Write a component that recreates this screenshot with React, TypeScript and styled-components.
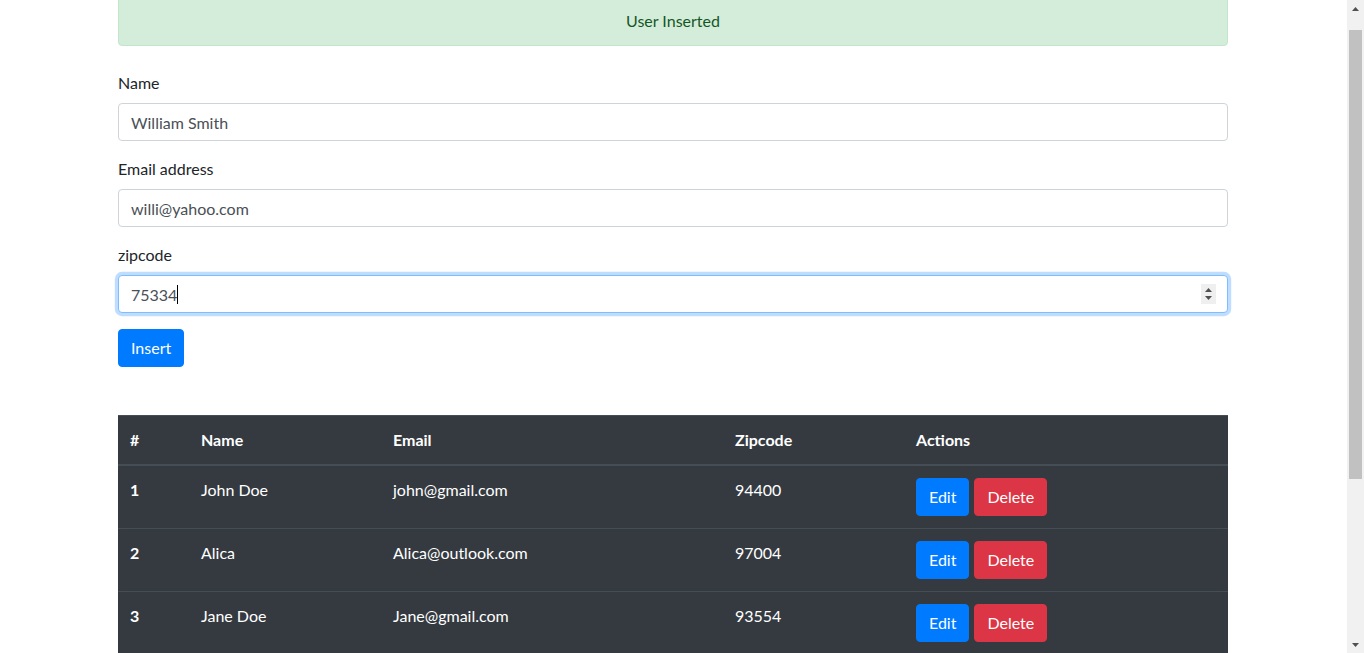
import React, { useEffect } from "react";
import styled, { createGlobalStyle } from "styled-components";

const GlobalStyle = createGlobalStyle`
  html { overflow-y: scroll; scrollbar-width: none; }
  html::-webkit-scrollbar { display: none; }
  body {
    margin: 0 18px 0 0;
    font-family: "Lato", "Noto Sans", sans-serif;
    font-size: 16px;
    line-height: 1.5;
    color: #212529;
    background: #fff;
  }
  *, *::before, *::after { box-sizing: border-box; }
`;

const ScrollBar = styled.div`
  position: fixed;
  top: 0;
  right: 0;
  width: 17px;
  height: 100vh;
  background: #f1f1f1;
  display: flex;
  flex-direction: column;
  align-items: center;
`;

const ScrollArrow = styled.div`
  height: 17px;
  width: 17px;
  display: flex;
  align-items: center;
  justify-content: center;
`;

const ScrollTrack = styled.div`
  flex: 1;
  width: 100%;
  padding: 13px 2px 157px;
  display: flex;
`;

const ScrollThumb = styled.div`
  flex: 1;
  background: #c1c1c1;
`;

const Container = styled.div`
  max-width: 1140px;
  margin: 0 auto;
  padding: 15px 15px 227px;
`;

const Alert = styled.div`
  padding: 12px 20px;
  margin-bottom: 25px;
  border: 1px solid #c3e6cb;
  border-radius: 4px;
  background: #d4edda;
  color: #155724;
  text-align: center;
`;

const FormGroup = styled.div`
  margin-bottom: 16px;
`;

const Label = styled.label`
  display: inline-block;
  margin-bottom: 8px;
`;

const Input = styled.input<{ $focused?: boolean }>`
  display: block;
  width: 100%;
  height: 38px;
  padding: 6px 12px;
  font-family: inherit;
  font-size: 16px;
  line-height: 1.5;
  color: #495057;
  background: #fff;
  border: 1px solid ${(p) => (p.$focused ? "#80bdff" : "#ced4da")};
  border-radius: 4px;
  outline: none;
  box-shadow: ${(p) => (p.$focused ? "0 0 0 3.2px rgba(0,123,255,.25)" : "none")};
  caret-color: transparent;
`;

const FieldWrap = styled.div`
  position: relative;
`;

const CaretLayer = styled.div`
  position: absolute;
  inset: 0;
  padding: 7px 13px;
  line-height: 24px;
  pointer-events: none;
  display: flex;
  align-items: center;
`;

const Ghost = styled.span`
  visibility: hidden;
  white-space: pre;
`;

const Caret = styled.span`
  width: 1px;
  height: 19px;
  background: #000;
`;

const Spinner = styled.div`
  position: absolute;
  right: 12px;
  top: 9px;
  width: 15px;
  height: 20px;
  background: #efefef;
  display: flex;
  flex-direction: column;
  align-items: center;
  justify-content: center;
  gap: 4px;
`;

const Button = styled.button<{ $variant?: "primary" | "danger" }>`
  display: inline-block;
  font-family: inherit;
  font-size: 16px;
  line-height: 1.5;
  padding: 6px 12px;
  border: 1px solid ${(p) => (p.$variant === "danger" ? "#dc3545" : "#007bff")};
  border-radius: 4px;
  background: ${(p) => (p.$variant === "danger" ? "#dc3545" : "#007bff")};
  color: #fff;
  cursor: pointer;
`;

const InsertRow = styled.div`
  margin-bottom: 48px;
`;

const Table = styled.table`
  width: 100%;
  border-collapse: collapse;
  background: #343a40;
  color: #fff;
`;

const Th = styled.th<{ $w?: number }>`
  text-align: left;
  font-weight: 700;
  padding: 12px;
  vertical-align: bottom;
  border-top: 1px solid #454d55;
  border-bottom: 2px solid #454d55;
  width: ${(p) => (p.$w ? `${p.$w}px` : "auto")};
`;

const Td = styled.td<{ $bold?: boolean }>`
  padding: 12px;
  vertical-align: top;
  border-top: 1px solid #454d55;
  font-weight: ${(p) => (p.$bold ? 700 : 400)};
`;

const Actions = styled.div`
  display: flex;
  gap: 5px;
`;

const users = [
  { id: 1, name: "John Doe", email: "john@gmail.com", zip: "94400" },
  { id: 2, name: "Alica", email: "Alica@outlook.com", zip: "97004" },
  { id: 3, name: "Jane Doe", email: "Jane@gmail.com", zip: "93554" },
];

export default function App() {
  useEffect(() => {
    window.scrollTo(0, 19);
  }, []);
  return (
    <>
      <GlobalStyle />
      <Container>
        <Alert>User Inserted</Alert>
        <form onSubmit={(e) => e.preventDefault()}>
          <FormGroup>
            <Label>Name</Label>
            <Input defaultValue="William Smith" />
          </FormGroup>
          <FormGroup>
            <Label>Email address</Label>
            <Input defaultValue="willi@yahoo.com" />
          </FormGroup>
          <FormGroup>
            <Label>zipcode</Label>
            <FieldWrap>
              <Input $focused defaultValue="75334" inputMode="numeric" />
              <CaretLayer>
                <Ghost>75334</Ghost>
                <Caret />
              </CaretLayer>
              <Spinner>
                <svg width="7" height="4" viewBox="0 0 7 4"><path d="M3.5 0L7 4H0z" fill="#505050" /></svg>
                <svg width="7" height="4" viewBox="0 0 7 4"><path d="M0 0h7L3.5 4z" fill="#505050" /></svg>
              </Spinner>
            </FieldWrap>
          </FormGroup>
          <InsertRow>
            <Button $variant="primary" type="submit">Insert</Button>
          </InsertRow>
        </form>
        <Table>
          <thead>
            <tr>
              <Th $w={71}>#</Th>
              <Th $w={192}>Name</Th>
              <Th $w={342}>Email</Th>
              <Th $w={181}>Zipcode</Th>
              <Th>Actions</Th>
            </tr>
          </thead>
          <tbody>
            {users.map((u) => (
              <tr key={u.id}>
                <Td $bold>{u.id}</Td>
                <Td>{u.name}</Td>
                <Td>{u.email}</Td>
                <Td>{u.zip}</Td>
                <Td>
                  <Actions>
                    <Button $variant="primary">Edit</Button>
                    <Button $variant="danger">Delete</Button>
                  </Actions>
                </Td>
              </tr>
            ))}
          </tbody>
        </Table>
      </Container>
      <ScrollBar>
        <ScrollArrow>
          <svg width="7" height="4" viewBox="0 0 7 4"><path d="M3.5 0L7 4H0z" fill="#505050" /></svg>
        </ScrollArrow>
        <ScrollTrack>
          <ScrollThumb />
        </ScrollTrack>
        <ScrollArrow>
          <svg width="7" height="4" viewBox="0 0 7 4"><path d="M0 0h7L3.5 4z" fill="#505050" /></svg>
        </ScrollArrow>
      </ScrollBar>
    </>
  );
}
